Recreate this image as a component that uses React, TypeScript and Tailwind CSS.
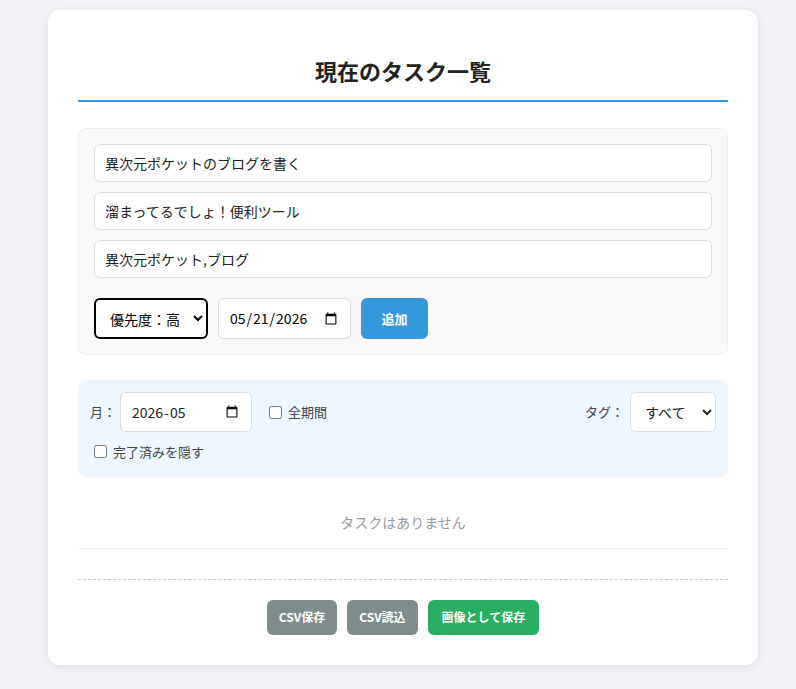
export default function App() {
  const font = { fontFamily: '"Noto Sans CJK JP", "Noto Sans", sans-serif' };
  return (
    <div className="min-h-[689px] bg-[#f0f2f5] px-[48px] pt-[10px] pb-[21px]" style={font}>
      <div className="w-[710px] rounded-xl bg-white px-[30px] pt-[40px] pb-[30px] shadow-[0_2px_10px_rgba(0,0,0,0.08)]">
        <h1 className="border-b-2 border-[#3498db] pb-[10px] text-center text-[22px] font-bold leading-[40px] text-[#222]">
          現在のタスク一覧
        </h1>

        {/* FORM */}
        <div className="mt-[26px] flex flex-col gap-[10px] rounded-lg border border-[#eee] bg-[#f9f9f9] p-[15px]">
          <input defaultValue="異次元ポケットのブログを書く" className="h-[38px] rounded-md border border-[#ddd] bg-white px-[10px] text-[14px] text-[#222]" />
          <input defaultValue="溜まってるでしょ！便利ツール" className="h-[38px] rounded-md border border-[#ddd] bg-white px-[10px] text-[14px] text-[#222]" />
          <input defaultValue="異次元ポケット,ブログ" className="h-[38px] rounded-md border border-[#ddd] bg-white px-[10px] text-[14px] text-[#222]" />
          <div className="mt-[10px] flex items-center gap-[10px]">
            <select className="h-[41px] w-[114px] rounded-md border-2 border-black bg-white px-[10px] text-[14px]">
              <option>優先度：高</option>
            </select>
            <input type="date" defaultValue="2026-05-21" className="h-[41px] w-[133px] rounded-md border border-[#ddd] bg-white px-[10px] text-[14px]" />
            <button className="h-[41px] w-[67px] rounded-md bg-[#3498db] text-[13px] font-bold text-white">追加</button>
          </div>
        </div>

        {/* FILTER */}
        <div className="mt-[25px] rounded-lg bg-[#eef6ff] px-[12px] pt-[12px] pb-[15px] text-[13px] text-[#444]">
          <div className="flex items-center">
            <span>月：</span>
            <input type="month" defaultValue="2026-05" className="ml-[4px] h-[40px] w-[132px] rounded-md border border-[#ddd] bg-white px-[10px] text-[14px] text-[#222]" />
            <label className="ml-[17px] flex items-center gap-[6px]">
              <input type="checkbox" className="h-[13px] w-[13px]" />
              全期間
            </label>
            <span className="ml-auto">タグ：</span>
            <select className="ml-[6px] h-[40px] w-[86px] rounded-md border border-[#ddd] bg-white px-[10px] text-[14px] text-[#222]">
              <option>すべて</option>
            </select>
          </div>
          <label className="mt-[10px] flex items-center gap-[6px] px-[4px]">
            <input type="checkbox" className="h-[13px] w-[13px]" />
            完了済みを隠す
          </label>
        </div>

        <div className="mt-[20px] border-b border-[#eee] py-[15px] text-center text-[14px] text-[#999]">
          タスクはありません
        </div>

        <div className="mt-[30px] flex justify-center gap-[10px] border-t border-dashed border-[#ccc] pt-[20px]">
          <button className="h-[35px] rounded-md bg-[#7f8c8d] px-[12px] text-[12px] font-bold text-white">CSV保存</button>
          <button className="h-[35px] rounded-md bg-[#7f8c8d] px-[12px] text-[12px] font-bold text-white">CSV読込</button>
          <button className="h-[35px] rounded-md bg-[#27ae60] px-[14px] text-[12px] font-bold text-white">画像として保存</button>
        </div>
      </div>
    </div>
  );
}
